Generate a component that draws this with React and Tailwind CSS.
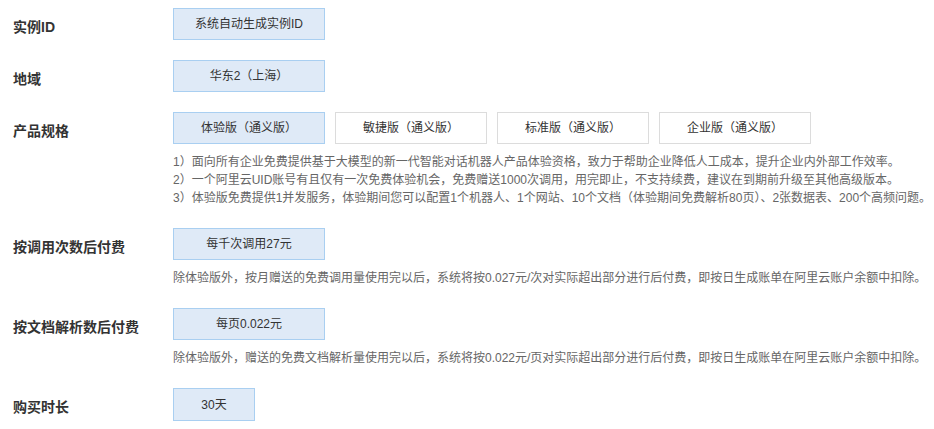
export default function App() {
  const font = { fontFamily: '"Liberation Sans", "Noto Sans CJK SC", sans-serif' };
  const sel = "flex items-center justify-center h-[32px] border border-[#a9cff1] bg-[#dfeaf7] text-[12px] text-[#333]";
  const unsel = "flex items-center justify-center h-[32px] border border-[#dcdcdc] bg-white text-[12px] text-[#333]";
  const label = "w-[160px] shrink-0 pt-[9px] leading-[20px] text-[14px] font-bold text-[#333]";
  const desc = "mt-[9px] mb-[1px] text-[12px] leading-[18px] text-[#666]";
  return (
    <div className="w-[934px] h-[429px] bg-white pl-[13px] pt-[8px] overflow-hidden" style={font}>
      <div className="flex flex-col gap-[20px]">
        <div className="flex items-start">
          <div className={label}>实例ID</div>
          <div className={sel + " w-[152px]"}>系统自动生成实例ID</div>
        </div>
        <div className="flex items-start">
          <div className={label}>地域</div>
          <div className={sel + " w-[152px]"}>华东2（上海）</div>
        </div>
        <div className="flex items-start">
          <div className={label}>产品规格</div>
          <div className="flex flex-col">
            <div className="flex gap-[10px]">
              <div className={sel + " w-[152px]"}>体验版（通义版）</div>
              <div className={unsel + " w-[152px]"}>敏捷版（通义版）</div>
              <div className={unsel + " w-[152px]"}>标准版（通义版）</div>
              <div className={unsel + " w-[152px]"}>企业版（通义版）</div>
            </div>
            <div className="mt-[9px] mb-[1px] text-[12px] leading-[18px] text-[#666] whitespace-nowrap">
              <div>1）面向所有企业免费提供基于大模型的新一代智能对话机器人产品体验资格，致力于帮助企业降低人工成本，提升企业内外部工作效率。</div>
              <div>2）一个阿里云UID账号有且仅有一次免费体验机会，免费赠送1000次调用，用完即止，不支持续费，建议在到期前升级至其他高级版本。</div>
              <div>3）体验版免费提供1并发服务，体验期间您可以配置1个机器人、1个网站、10个文档（体验期间免费解析80页）、2张数据表、200个高频问题。</div>
            </div>
          </div>
        </div>
        <div className="flex items-start">
          <div className={label}>按调用次数后付费</div>
          <div className="flex flex-col">
            <div className={sel + " w-[152px]"}>每千次调用27元</div>
            <div className={desc + " whitespace-nowrap"}>除体验版外，按月赠送的免费调用量使用完以后，系统将按0.027元/次对实际超出部分进行后付费，即按日生成账单在阿里云账户余额中扣除。</div>
          </div>
        </div>
        <div className="flex items-start">
          <div className={label}>按文档解析数后付费</div>
          <div className="flex flex-col">
            <div className={sel + " w-[152px]"}>每页0.022元</div>
            <div className={desc + " whitespace-nowrap"}>除体验版外，赠送的免费文档解析量使用完以后，系统将按0.022元/页对实际超出部分进行后付费，即按日生成账单在阿里云账户余额中扣除。</div>
          </div>
        </div>
        <div className="flex items-start">
          <div className={label}>购买时长</div>
          <div className={sel + " w-[82px] !h-[33px]"}>30天</div>
        </div>
      </div>
    </div>
  );
}
